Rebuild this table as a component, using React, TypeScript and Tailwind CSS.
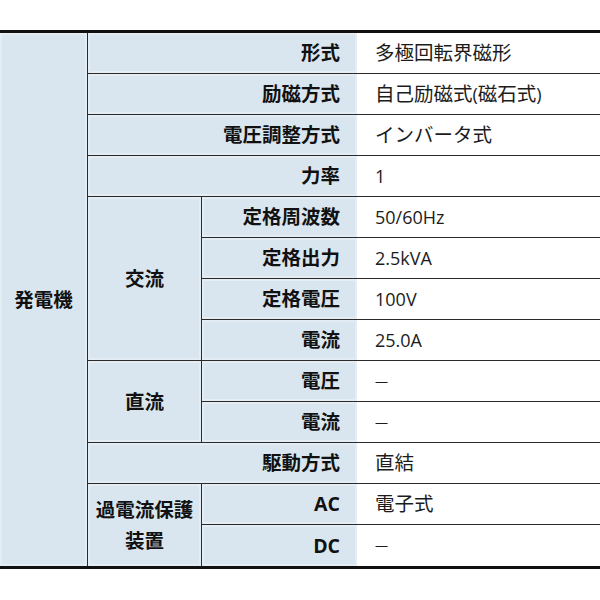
import React from "react";

// 発電機の仕様表
const CJK = /([\u3000-\u30ff\u3400-\u9fff\uff01-\uff5e]+)/;

function Txt({ s, latin = "text-[18px]" }: { s: string; latin?: string }) {
  return (
    <>
      {s.split(CJK).filter(Boolean).map((part, i) =>
        CJK.test(part) ? (
          <span key={i} className="text-[19.5px]">{part}</span>
        ) : (
          <span key={i} className={latin}>{part}</span>
        )
      )}
    </>
  );
}

const label =
  "flex items-center bg-[#d9e6ef] shadow-[inset_0_0_0_2px_#e4edf4] font-bold text-[#111]";
const value = "flex items-center bg-white pl-[18px] text-[#1c1c1c]";
const line = "border-b border-[#2b2b2b]";

type Row = { name: string; val: string };

const TOP: Row[] = [
  { name: "形式", val: "多極回転界磁形" },
  { name: "励磁方式", val: "自己励磁式(磁石式)" },
  { name: "電圧調整方式", val: "インバータ式" },
  { name: "力率", val: "1" },
];

const AC: Row[] = [
  { name: "定格周波数", val: "50/60Hz" },
  { name: "定格出力", val: "2.5kVA" },
  { name: "定格電圧", val: "100V" },
  { name: "電流", val: "25.0A" },
];

const DC: Row[] = [
  { name: "電圧", val: "—" },
  { name: "電流", val: "—" },
];

function Val({ s }: { s: string }) {
  return s === "—" ? <Txt s={s} latin="text-[13px]" /> : <Txt s={s} />;
}

export default function App() {
  return (
    <div className="h-[600px] w-[600px] bg-white pt-[30px] font-['Open_Sans','Noto_Sans_CJK_JP',sans-serif] leading-none">
      <div className="grid grid-cols-[88px_114px_155px_1fr] grid-rows-[repeat(13,41px)] border-y-[3px] border-[#111]">
        <div className={`${label} col-start-1 row-[1/14] justify-center border-r border-[#2b2b2b]`}>
          <Txt s="発電機" />
        </div>

        {TOP.map((r) => (
          <React.Fragment key={r.name}>
            <div className={`${label} ${line} col-[2/4] justify-end pr-[17px]`}>
              <Txt s={r.name} />
            </div>
            <div className={`${value} ${line} col-start-4`}>
              <Val s={r.val} />
            </div>
          </React.Fragment>
        ))}

        <div className={`${label} ${line} col-start-2 row-[5/9] justify-center border-r border-[#2b2b2b]`}>
          <Txt s="交流" />
        </div>
        {AC.map((r) => (
          <React.Fragment key={r.name}>
            <div className={`${label} ${line} col-start-3 justify-end pr-[17px]`}>
              <Txt s={r.name} />
            </div>
            <div className={`${value} ${line} col-start-4`}>
              <Val s={r.val} />
            </div>
          </React.Fragment>
        ))}

        <div className={`${label} ${line} col-start-2 row-[9/11] justify-center border-r border-[#2b2b2b]`}>
          <Txt s="直流" />
        </div>
        {DC.map((r) => (
          <React.Fragment key={r.name}>
            <div className={`${label} ${line} col-start-3 justify-end pr-[17px]`}>
              <Txt s={r.name} />
            </div>
            <div className={`${value} ${line} col-start-4`}>
              <Val s={r.val} />
            </div>
          </React.Fragment>
        ))}

        <div className={`${label} ${line} col-[2/4] justify-end pr-[17px]`}>
          <Txt s="駆動方式" />
        </div>
        <div className={`${value} ${line} col-start-4`}>
          <Txt s="直結" />
        </div>

        <div className={`${label} col-start-2 row-[12/14] flex-col justify-center gap-[12px] border-r border-[#2b2b2b] text-center`}>
          <div><Txt s="過電流保護" /></div>
          <div><Txt s="装置" /></div>
        </div>
        <div className={`${label} ${line} col-start-3 justify-end pr-[17px]`}>
          <Txt s="AC" latin="text-[19.5px]" />
        </div>
        <div className={`${value} ${line} col-start-4`}>
          <Txt s="電子式" />
        </div>
        <div className={`${label} col-start-3 justify-end pr-[17px]`}>
          <Txt s="DC" latin="text-[19.5px]" />
        </div>
        <div className={`${value} col-start-4`}>
          <Val s="—" />
        </div>
      </div>
    </div>
  );
}
